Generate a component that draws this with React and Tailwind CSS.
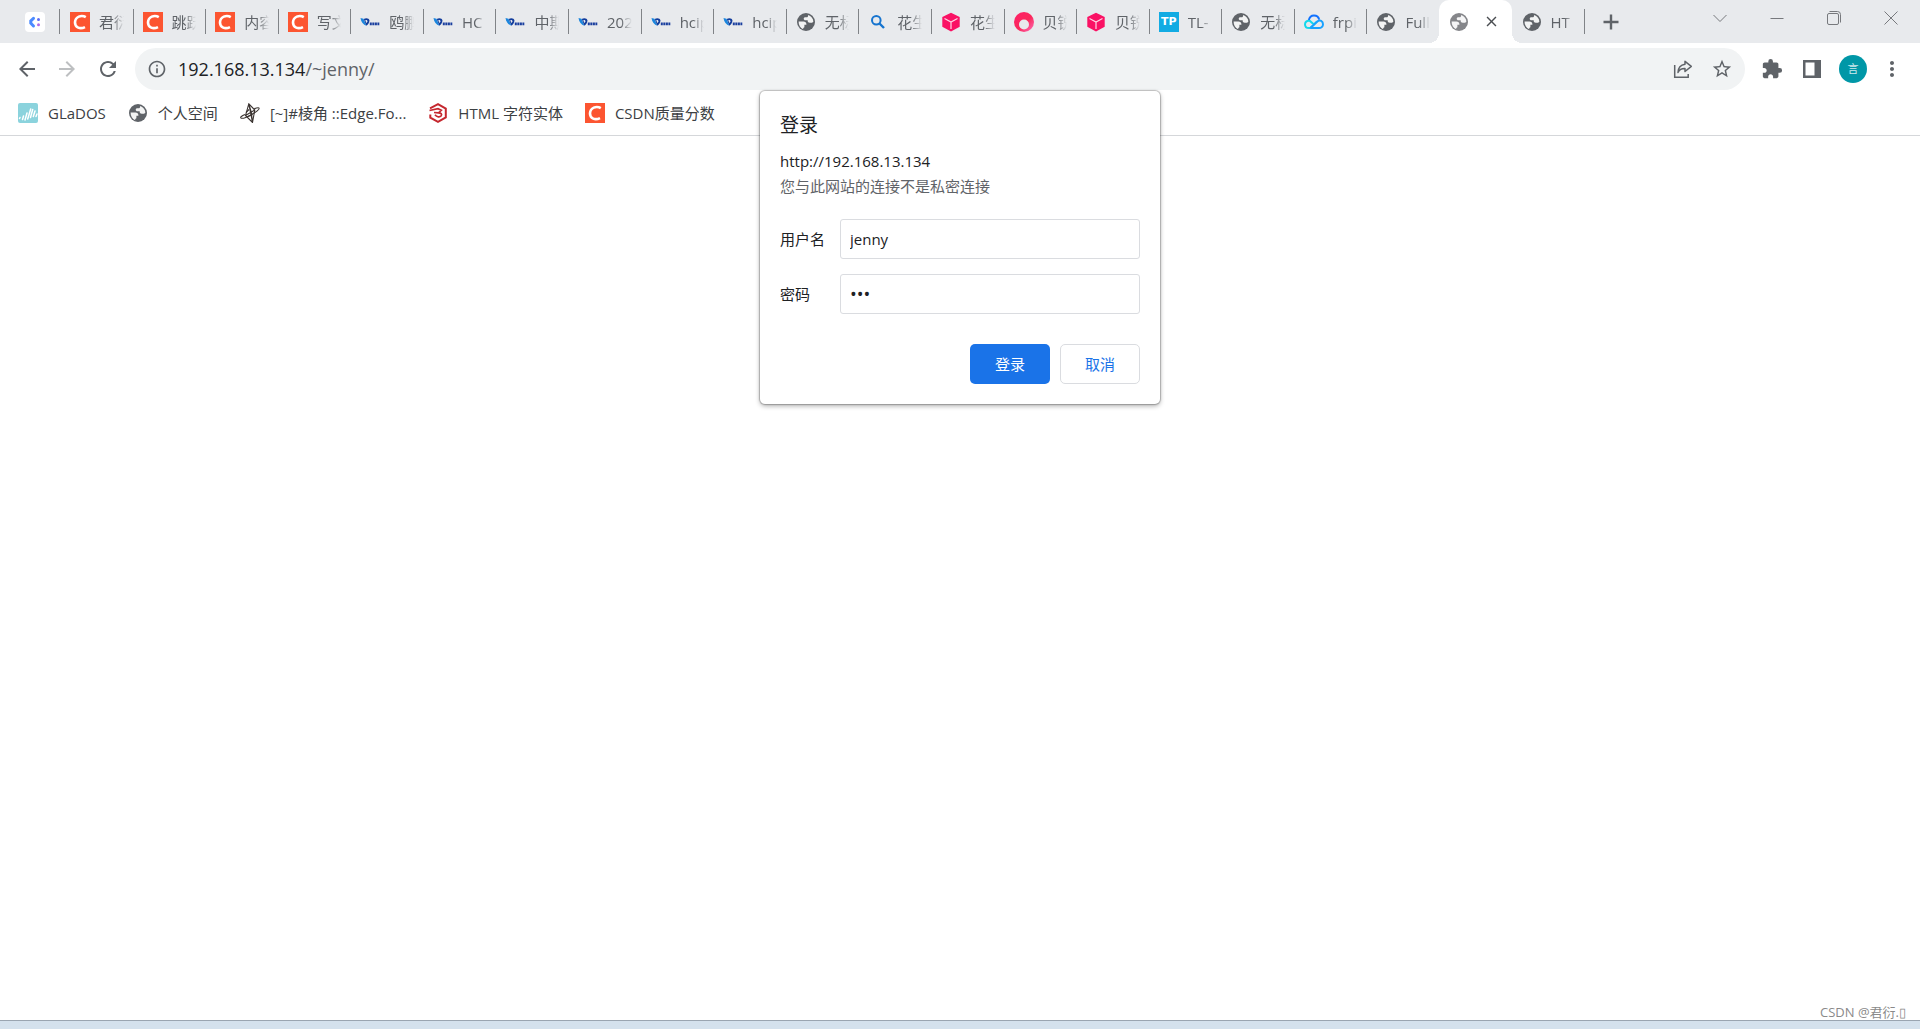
import React from "react";
import {
  MdArrowBack, MdArrowForward, MdRefresh, MdInfoOutline, MdStarBorder, MdExtension, MdMoreVert, MdClose,
} from "react-icons/md";

function Globe({ faded }) {
  return (
    <svg viewBox="0 0 20 20" className={faded ? "size-5 shrink-0 text-[#85868a]" : "size-5 shrink-0 text-[#5f6368]"} aria-hidden="true">
      <circle cx="10" cy="10" r="9" fill="currentColor" />
      <path
        d="M2.6 9.6h4.9c1.7 0 2.9 1.1 2.9 2.6v.6h-2v1.900c0 .7-.5 1.100-1.200 1.200v1.300C4.300 16 2.500 13.300 2.600 9.600z"
        fill="#fff" fillOpacity=".92"
      />
      <path
        d="M12.200 2.900c2.800.8 5 3.500 5.200 6.600-.5.900-1.200 1.300-2.200 1.300h-1.500c-1.200 0-2-.7-2-1.700V8.300H9.400c-1 0-1.700-.7-1.700-1.500s.7-1.500 1.600-1.500h1.200c.9 0 1.500-.6 1.500-1.400z"
        fill="#fff" fillOpacity=".92"
      />
    </svg>
  );
}

function CsdnIcon() {
  return (
    <svg viewBox="0 0 20 20" className="size-5 shrink-0" aria-hidden="true">
      <path d="M0 0h20v20H0z" fill="#fc5531" />
      <path d="M15.800 5.100C11.400 2.500 5.200 4.600 5 10.400c-.1 5.400 5.200 7 10 4.700" fill="none" stroke="#fff" strokeWidth="2.600" />
    </svg>
  );
}

function OupengIcon() {
  return (
    <svg viewBox="0 0 20 20" className="size-5 shrink-0" aria-hidden="true">
      <path d="M.5 6l3 .7 2.900 7C3.300 12.800 1 10 .5 6z" fill="#1c86dd" />
      <path d="M3.800 7c1.800-1.500 5.400-1.100 5.600 1.500.1 2-1.400 4-3 5.200z" fill="#123c9c" />
      <path d="M5.300 8.200c1.200-.7 2.200 0 2.100 1.100-.1.700-.5 1.300-1.100 1.700z" fill="#e8eaed" />
      <path d="M9.800 10.400h2v2.800h-2zM12.300 10.400h2.100v2.800h-2.100zM14.900 10.400h2v2.800h-2zM17.400 10.400h1.900v2.800h-1.900z" fill="#1a3f9f" />
    </svg>
  );
}

function CubeIcon() {
  return (
    <svg viewBox="0 0 20 20" className="size-5 shrink-0" aria-hidden="true">
      <path d="M10 .7l8.700 4.400v9.700L10 19.400l-8.700-4.600V5.100z" fill="#fa1164" />
      <path d="M3.500 6.500l6.500 3.600 6.500-3.600M10 10v7" fill="none" stroke="#ffd5e4" strokeWidth="1.200" />
    </svg>
  );
}

function OrayIcon() {
  return (
    <svg viewBox="0 0 20 20" className="size-5 shrink-0" aria-hidden="true">
      <defs>
        <linearGradient id="oray" x1="0" y1="0" x2="1" y2="1">
          <stop offset="0" stopColor="#ff1f69" />
          <stop offset=".55" stopColor="#fa285b" />
          <stop offset="1" stopColor="#ff73bd" />
        </linearGradient>
      </defs>
      <circle cx="10" cy="10" r="10" fill="url(#oray)" />
      <circle cx="10" cy="12.500" r="5" fill="#e8eaed" />
    </svg>
  );
}

function TpIcon() {
  return (
    <span className="flex size-5 shrink-0 items-center justify-center bg-[#12abe3] font-['DejaVu_Sans',sans-serif] text-[11px] leading-5 font-bold text-white" aria-hidden="true">
      TP
    </span>
  );
}

function CloudIcon() {
  return (
    <svg viewBox="0 0 20 20" className="size-5 shrink-0" aria-hidden="true" fill="none" strokeWidth="2">
      <path d="M4.800 8.200C5.400 5 7.500 3.400 10 3.400c2.700 0 4.700 1.900 5.200 4.200" stroke="#1272ff" />
      <path d="M9.700 12.200L5.900 8.900C3.400 8 1 9.800 1 12.200c0 2.300 1.700 3.900 4 3.900h1.200L13 9.500" stroke="#13d8ec" />
      <path d="M6.300 16.100l7-6.500c2.800-2.400 5.700-.2 5.700 2.700 0 2.300-1.800 3.800-4 3.800H6.300" stroke="#18a2ff" />
    </svg>
  );
}

function DotsIcon() {
  return (
    <svg viewBox="0 0 20 20" className="size-5 shrink-0" aria-hidden="true">
      <rect width="20" height="20" rx="4" fill="#fff" />
      <path d="M8.500 6.400L5.800 9v2.200L8.500 14" fill="none" stroke="#4b8bff" strokeWidth="3" strokeLinecap="round" />
      <circle cx="13.500" cy="7.500" r="1.500" fill="#5c6bf5" />
      <circle cx="13.500" cy="12.800" r="1.500" fill="#b06be8" />
    </svg>
  );
}

function SearchIcon() {
  return (
    <svg viewBox="0 0 20 20" className="size-5 shrink-0" aria-hidden="true" fill="none" stroke="#1674cf" strokeWidth="2">
      <circle cx="8.300" cy="8.300" r="4.300" />
      <path d="M11.500 11.500l4.500 4.500" strokeWidth="2.400" />
    </svg>
  );
}

function GladosIcon() {
  return (
    <svg viewBox="0 0 20 20" className="size-5 shrink-0" aria-hidden="true">
      <rect width="20" height="20" rx="2" fill="#8bd3dd" />
      <path d="M1.500 15.500l.5-1M4.500 16.500l1-3.500M7 17l2-7M9.700 16l3-10M12.500 14.500l2.200-8M15.300 13.500L17 8M18 13.500l1-2.500" stroke="#fff" strokeWidth="1.500" strokeLinecap="round" />
    </svg>
  );
}

function ForumIcon() {
  return (
    <svg viewBox="0 0 20 20" className="size-5 shrink-0" aria-hidden="true" fill="none" stroke="#3b3431" strokeWidth="1.100">
      <path d="M8.800.8L5.500 12.500l7 7L14.800 7zM8.800.8l3.700 18.700M5.500 12.500L14.800 7M8.800.8l2.500 8.200 1.200 10.500" />
      <path d="M5 11.500C1.500 13 .2 14.200.8 14.900c.9 1 5.800-.6 10.500-3.200 4.800-2.600 8.400-5.600 7.900-6.500-.4-.8-2.400-.5-5 .5" />
      <path d="M6 9.500l3-3M7 14l5.500-2.500" />
    </svg>
  );
}

function EntityIcon() {
  return (
    <svg viewBox="0 0 20 20" className="size-5 shrink-0" aria-hidden="true" fill="none" stroke="#c5282f" strokeWidth="2">
      <path d="M2 5.300L10 1.200l7.800 4.300v9L10 18.800l-7.700-4.200v-3" />
      <path d="M1.500 7.500l8.500-1.800 3.300 1.600-2.800 2.500c2.500 0 3.700 1.400 2.700 2.900-1.200 1.700-4.500 1.500-6.200-.9M6 9.500l4.500.3" strokeWidth="1.700" />
    </svg>
  );
}

const tabs = [
  [CsdnIcon, "君衍"], [CsdnIcon, "跳跃"], [CsdnIcon, "内容"], [CsdnIcon, "写文"],
  [OupengIcon, "鸥鹏"], [OupengIcon, "HC"], [OupengIcon, "中期"], [OupengIcon, "202"], [OupengIcon, "hcip"], [OupengIcon, "hcip"],
  [Globe, "无标"], [SearchIcon, "花生"], [CubeIcon, "花生"], [OrayIcon, "贝锐"], [CubeIcon, "贝锐"],
  [TpIcon, "TL-"], [Globe, "无标"], [CloudIcon, "frpi"], [Globe, "Full"], [Globe, ""], [Globe, "HT"],
];
const ACTIVE = 19;

const bookmarks = [
  [GladosIcon, "GLaDOS"], [Globe, "个人空间"], [ForumIcon, "[~]#棱角 ::Edge.Fo..."], [EntityIcon, "HTML 字符实体"], [CsdnIcon, "CSDN质量分数"],
];

function Tab({ Icon, label, divider }) {
  return (
    <button type="button" className="relative flex h-[43px] min-w-0 flex-1 items-center gap-[9px] pr-[9px] pl-[10px]">
      <Icon />
      <span className="h-6 min-w-0 flex-1 overflow-hidden text-left text-[15px] leading-6 whitespace-nowrap text-[#5f6368] [mask-image:linear-gradient(to_right,black_55%,transparent)]">
        {label}
      </span>
      {divider && <span className="absolute top-[9px] -right-px h-[25px] w-px bg-[#808387]" />}
    </button>
  );
}

function ActiveTab() {
  return (
    <div className="relative flex h-[43px] min-w-0 flex-1 items-center justify-between rounded-t-[10px] bg-white pr-[9px] pl-[10px]">
      <span className="absolute bottom-0 -left-[10px] size-[10px] bg-[radial-gradient(circle_at_0_0,transparent_10px,white_10px)]" />
      <span className="absolute -right-[10px] bottom-0 size-[10px] bg-[radial-gradient(circle_at_100%_0,transparent_10px,white_10px)]" />
      <Globe faded />
      <button type="button" aria-label="关闭标签页" className="pr-[3px]"><MdClose className="size-[17px] text-[#4a4d51]" /></button>
    </div>
  );
}

function TabStrip() {
  return (
    <header className="flex h-[43px] bg-[#e8eaed]">
      <button type="button" aria-label="标签页" className="relative flex w-[60px] shrink-0 items-center pl-[25px]">
        <DotsIcon />
        <span className="absolute top-[9px] right-0 h-[25px] w-px bg-[#808387]" />
      </button>
      <nav className="flex min-w-0 flex-1">
        {tabs.map(([Icon, label], i) =>
          i === ACTIVE ? <ActiveTab key={i} /> : <Tab key={i} Icon={Icon} label={label} divider={i !== ACTIVE - 1} />
        )}
      </nav>
      <div className="flex w-84 shrink-0 justify-between pr-px text-[#5f6368]">
        <button type="button" aria-label="新标签页" className="flex w-[54px] items-center justify-center">
          <svg viewBox="0 0 16 16" className="size-4" stroke="currentColor" strokeWidth="2.400"><path d="M8 .5v15M.5 8h15" /></svg>
        </button>
        <div className="flex h-9 text-[#77797d]">
          <button type="button" aria-label="搜索标签页" className="flex w-[57px] items-center justify-center">
            <svg viewBox="0 0 14 14" className="size-[14px]" fill="none" stroke="currentColor"><path d="M.5 4l6.500 6.500L13.500 4" /></svg>
          </button>
          <button type="button" aria-label="最小化" className="flex w-[57px] items-center justify-center">
            <svg viewBox="0 0 14 14" className="size-[14px]" fill="none" stroke="currentColor"><path d="M.5 7.500h13" /></svg>
          </button>
          <button type="button" aria-label="还原" className="flex w-[57px] items-center justify-center">
            <svg viewBox="0 0 14 14" className="size-[14px]" fill="none" stroke="currentColor"><rect x=".5" y="2.500" width="11" height="11" rx="1.500" /><path d="M2.500.5h8a3 3 0 0 1 3 3v8" /></svg>
          </button>
          <button type="button" aria-label="关闭" className="flex w-[57px] items-center justify-center">
            <svg viewBox="0 0 14 14" className="size-[14px]" fill="none" stroke="currentColor"><path d="M.5.5l13 13M13.500.5l-13 13" /></svg>
          </button>
        </div>
      </div>
    </header>
  );
}

function Toolbar() {
  return (
    <div className="flex h-[52px] items-center pr-4 pl-[15px] text-[#5f6368]">
      <button type="button" aria-label="后退" className="mr-4 shrink-0"><MdArrowBack className="size-6" /></button>
      <button type="button" aria-label="前进" className="mr-[17px] shrink-0 text-[#bdbfc1]"><MdArrowForward className="size-6" /></button>
      <button type="button" aria-label="重新加载" className="mr-[15px] shrink-0"><MdRefresh className="size-6" /></button>
      <div className="flex h-[42px] min-w-0 flex-1 items-center rounded-full bg-[#f1f3f4] px-3">
        <MdInfoOutline className="size-5 shrink-0" aria-hidden="true" />
        <a href="#address" className="ml-[11px] flex-1 text-[18px] leading-7 text-[#5f6368]">
          <span className="text-[#202124]">192.168.13.134</span>/~jenny/
        </a>
        <button type="button" aria-label="分享" className="mr-[18px]">
          <svg viewBox="0 0 20 20" className="size-5" fill="none" stroke="currentColor" strokeWidth="1.500">
            <path d="M1.700 6v12.300h13.500V15" />
            <path d="M12 2.300l6.300 5L12 12.500V9.600c-3.500-.1-5.700 1.200-7 3.900.2-4.500 2.600-7.600 7-8.200z" strokeLinejoin="round" />
          </svg>
        </button>
        <button type="button" aria-label="收藏"><MdStarBorder className="size-[22px]" /></button>
      </div>
      <button type="button" aria-label="扩展程序" className="ml-4 shrink-0"><MdExtension className="size-[22px]" /></button>
      <button type="button" aria-label="侧边栏" className="ml-5 shrink-0">
        <svg viewBox="0 0 18 18" className="size-[18px]"><path fillRule="evenodd" fill="currentColor" d="M0 0h18v18H0zM2.500 2.500v13h9v-13z" /></svg>
      </button>
      <button type="button" aria-label="个人资料" className="ml-[18px] size-7 shrink-0 rounded-full bg-[#0097a7] text-[11px] leading-7 text-white/80">言</button>
      <button type="button" aria-label="菜单" className="ml-[13px] shrink-0"><MdMoreVert className="size-6" /></button>
    </div>
  );
}

function LoginDialog() {
  return (
    <form
      onSubmit={(e) => e.preventDefault()}
      className="absolute top-[91px] left-1/2 w-[400px] -translate-x-1/2 rounded-[5px] bg-white p-5 text-[15px] text-[#202124] shadow-[0_0_1px_1px_rgba(0,0,0,0.22),0_2px_5px_rgba(0,0,0,0.32)]"
    >
      <h1 className="text-[19px] leading-7">登录</h1>
      <p className="mt-[10px] leading-[25px]">http://192.168.13.134</p>
      <p className="leading-[25px] text-[#5f6368]">您与此网站的连接不是私密连接</p>
      <div className="mt-5 flex items-center">
        <label htmlFor="user" className="w-[60px]">用户名</label>
        <input id="user" defaultValue="jenny" className="h-10 min-w-0 flex-1 rounded-[3px] border border-[#dadce0] px-[9px] outline-none" />
      </div>
      <div className="mt-[15px] flex items-center">
        <label htmlFor="pass" className="w-[60px]">密码</label>
        <input id="pass" type="password" defaultValue="123" className="h-10 min-w-0 flex-1 rounded-[3px] border border-[#dadce0] px-[9px] text-[18px] outline-none" />
      </div>
      <div className="mt-[30px] flex justify-end gap-[10px]">
        <button type="submit" className="h-10 w-20 rounded-[5px] bg-[#1a73e8] text-white">登录</button>
        <button type="button" className="h-10 w-20 rounded-[5px] border border-[#dadce0] text-[#1a73e8]">取消</button>
      </div>
    </form>
  );
}

export default function App() {
  return (
    <div className="relative flex min-h-screen flex-col bg-white font-['Open_Sans','Noto_Sans_CJK_SC',sans-serif]">
      <TabStrip />
      <Toolbar />
      <nav className="flex h-[41px] items-center gap-[22px] border-b border-[#d5d7da] pb-1 pl-[18px] text-[15px] text-[#3c4043]">
        {bookmarks.map(([Icon, label]) => (
          <a key={label} href="#bookmark" className="flex items-center gap-[10px] leading-6 whitespace-nowrap">
            <Icon />
            {label}
          </a>
        ))}
      </nav>
      <main className="flex flex-1 items-end justify-end pr-[14px]">
        <p className="text-[13px] leading-4 text-[#8a8a8a]">CSDN @君衍.▯</p>
      </main>
      <footer className="h-[9px] border-t border-[#9aa5b1] bg-[#d4e1ed]" />
      <LoginDialog />
    </div>
  );
}
